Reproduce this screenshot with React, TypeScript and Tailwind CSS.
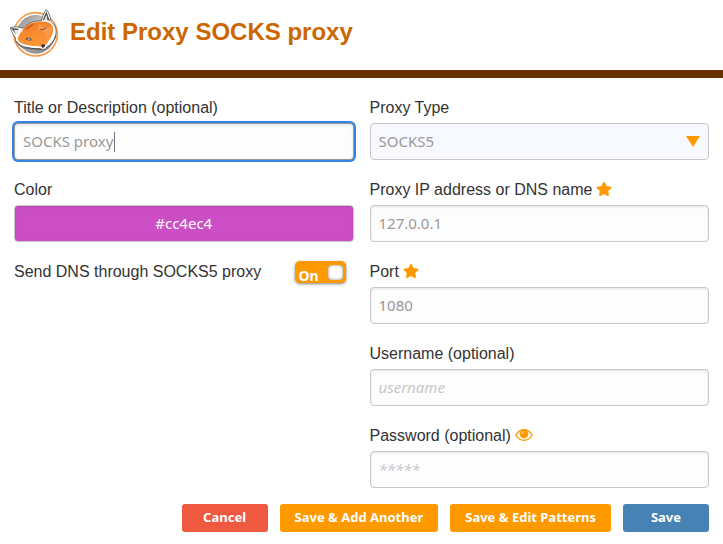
import { useState } from "react";
import type { InputHTMLAttributes, ReactNode } from "react";
import { FaStar } from "react-icons/fa";

const control =
  "block h-[37px] w-full rounded border px-2 pb-px font-['Noto_Sans',sans-serif] text-[15px] text-[#999] outline-none placeholder:text-[#c8c8c8]";

const inset = "bg-[#fdfdfd] shadow-[inset_0_1px_3px_rgba(0,0,0,0.1)]";

const actionButton =
  "h-7 min-w-[86px] rounded-[3px] px-[15px] pb-[2px] font-['Noto_Sans',sans-serif] text-[13px] leading-[26px] font-bold whitespace-nowrap text-white";

function FoxLogo() {
  return (
    <svg viewBox="0 0 150 150" className="size-[50px] shrink-0" aria-hidden="true">
      <defs>
        <linearGradient id="disc" x1="0" y1="0" x2="1" y2="1">
          <stop offset="0" stopColor="#888" />
          <stop offset="0.35" stopColor="#bbb" />
          <stop offset="1" stopColor="#777" />
        </linearGradient>
        <linearGradient id="fur" x1="0" y1="0" x2="0.4" y2="1">
          <stop offset="0" stopColor="#ee7d25" />
          <stop offset="1" stopColor="#ff9638" />
        </linearGradient>
      </defs>
      <circle cx="77" cy="76" r="65" fill="#fff" stroke="#f79a4d" strokeWidth="5" />
      <circle cx="77" cy="76" r="58" fill="url(#disc)" />
      <path
        d="M1 56 C14 52 27 53 40 58 C52 43 70 35 94 36 C97 22 102 10 109 2 C117 10 122 24 123 38 C136 48 141 62 137 80 C133 96 120 110 107 119 C101 122 94 121 88 119 C66 121 42 120 28 110 C17 101 15 94 17 87 C9 78 4 67 1 56Z"
        fill="#fff"
        stroke="#555"
        strokeWidth="2.5"
        strokeLinejoin="round"
      />
      <path d="M3 57 L27 59 L23 64 L12 62 L19 78Z M109 7 L120 37 L112 33 L109 18 L103 33 L98 34Z" fill="#555" />
      <path d="M14 64 L27 65 L22 79Z M109 20 L112 35 L104 33Z" fill="#e4e4e4" />
      <path
        d="M40 60 C51 45 70 38 94 38 C107 36 120 40 126 49 C133 60 130 73 122 86 C115 94 111 106 101 113 C91 113 78 111 64 111 C50 112 37 108 28 99 C22 93 22 88 26 81 C30 74 34 68 40 60Z"
        fill="url(#fur)"
      />
      <path d="M88 44 C80 54 84 64 94 67 C105 70 110 76 109 86 C121 78 128 66 126 52 C118 60 101 56 88 44Z" fill="#f79a4d" />
      <path d="M42 61 C53 50 65 44 77 42 C69 49 62 55 52 62Z" fill="#d9641d" />
      <path d="M25 96 C39 109 56 108 75 112 L93 116 C68 118 37 117 25 96Z" fill="#fff" />
      <path d="M46 90 C52 84 61 84 66 93 C60 96 52 95 46 90Z" fill="#6b5a50" />
      <path d="M52 90 C55 87 59 88 61 91 C58 93 55 93 52 90Z" fill="#ddd" />
      <path d="M91 62 C98 63 104 61 109 55" stroke="#8c4b22" strokeWidth="3" fill="none" />
      <path d="M129 57 C132 72 125 85 118 94 L110 110 C124 101 136 88 135 66Z" fill="#fff" />
      <path d="M93 109 C96 105 102 105 105 109 C105 115 101 118 97 116Z" fill="#333" />
      <path d="M19 96 C27 118 70 118 95 121 M108 117 C121 108 134 96 137 80" stroke="#444" strokeWidth="3" fill="none" />
    </svg>
  );
}

function Field({ id, label, icon, children }: { id: string; label: string; icon?: ReactNode; children: ReactNode }) {
  return (
    <div>
      <div className="mb-1 flex h-6 items-center gap-1 text-[#333]">
        <label htmlFor={id} className="pt-0.5">{label}</label>
        {icon}
      </div>
      {children}
    </div>
  );
}

function TextBox(props: InputHTMLAttributes<HTMLInputElement>) {
  return <input {...props} className={`${control} ${inset} border-[#c8c8ca] placeholder:italic`} />;
}

const star = <FaStar className="size-4 text-[#ff9900]" aria-hidden="true" />;

export default function App() {
  const [title, setTitle] = useState("SOCKS proxy");
  const [dns, setDns] = useState(true);
  const [reveal, setReveal] = useState(false);

  return (
    <main className="bg-white font-['Liberation_Sans',Arial,sans-serif] text-base">
      <header className="flex h-[78px] items-start gap-[10px] border-b-8 border-[#663300] pt-[9px] pl-[10px]">
        <FoxLogo />
        <h1 className="pt-[9px] text-2xl leading-7 font-bold text-[#cc6600]">Edit Proxy {title}</h1>
      </header>

      <form className="px-[14px] pt-[17px]" onSubmit={(e) => e.preventDefault()}>
        <div className="grid grid-cols-2 gap-4">
          <div className="flex flex-col gap-[17px]">
            <Field id="title" label="Title or Description (optional)">
              <div className="relative">
                <input
                  id="title"
                  value={title}
                  onChange={(e) => setTitle(e.target.value)}
                  className={`${control} ${inset} border-[#999] caret-transparent ring-2 ring-[#3584e4]`}
                />
                <span className="absolute top-[9px] left-[100px] h-5 w-px bg-[#777]" />
              </div>
            </Field>
            <Field id="color" label="Color">
              <input
                id="color"
                readOnly
                value="#cc4ec4"
                className="block h-[37px] w-full rounded border border-[#c8c8ca] bg-[#cc4ec4] pb-px text-center font-['Noto_Sans',sans-serif] text-[15px] text-white shadow-[inset_0_1px_3px_rgba(0,0,0,0.1)] outline-none"
              />
            </Field>
            <div className="flex h-[26px] items-center justify-between pr-2 text-[#333]">
              <label htmlFor="dns">Send DNS through SOCKS5 proxy</label>
              <label className="flex h-[22px] w-[51px] items-center justify-between rounded-[5px] bg-[#ff9900] pr-[3px] pl-1 shadow-[0_1px_3px_rgba(0,0,0,0.5)]">
                <input id="dns" type="checkbox" checked={dns} onChange={(e) => setDns(e.target.checked)} className="sr-only" />
                <span className="pt-[7px] font-['Noto_Sans',sans-serif] text-[14px] leading-4 font-bold text-white">
                  {dns ? "On" : "Off"}
                </span>
                <span className="size-[15px] rounded bg-white shadow-[inset_0_0_3px_rgba(0,0,0,0.5)]" />
              </label>
            </div>
          </div>

          <div className="flex flex-col gap-[17px]">
            <Field id="type" label="Proxy Type">
              <div className="relative">
                <select id="type" defaultValue="SOCKS5" className={`${control} appearance-none border-[#c8c8ca] bg-[#f8f9ff]`}>
                  <option>SOCKS5</option>
                  <option>SOCKS4</option>
                  <option>HTTP</option>
                </select>
                <svg viewBox="0 0 14 11" className="pointer-events-none absolute top-[13px] right-[9px] h-[11px] w-[14px]" aria-hidden="true">
                  <path d="M0 0H14L7 11Z" fill="#ff9900" />
                </svg>
              </div>
            </Field>
            <Field id="address" label="Proxy IP address or DNS name" icon={star}>
              <TextBox id="address" defaultValue="127.0.0.1" />
            </Field>
            <Field id="port" label="Port" icon={star}>
              <TextBox id="port" defaultValue="1080" />
            </Field>
            <Field id="username" label="Username (optional)">
              <TextBox id="username" placeholder="username" />
            </Field>
            <Field
              id="password"
              label="Password (optional)"
              icon={
                <button type="button" aria-label="Show password" onClick={() => setReveal(!reveal)}>
                  <svg viewBox="0 0 18 12" className="h-3 w-[18px]" aria-hidden="true">
                    <path d="M0.8 6C5 -1 13 -1 17.2 6C13 13 5 13 0.8 6Z" fill="none" stroke="#ff9900" strokeWidth="1.3" />
                    <circle cx="9" cy="5" r="4.4" fill="#ff9900" />
                    <path d="M6.8 4.8C6.8 3.5 7.7 2.7 9 2.6" fill="none" stroke="#fff" strokeWidth="0.7" />
                  </svg>
                </button>
              }
            >
              <TextBox id="password" type={reveal ? "text" : "password"} placeholder="*****" />
            </Field>
          </div>
        </div>

        <div className="mt-4 flex justify-end gap-3">
          <button type="button" className={`${actionButton} bg-[#ef5940]`}>Cancel</button>
          <button type="button" className={`${actionButton} bg-[#ff9900]`}>Save &amp; Add Another</button>
          <button type="button" className={`${actionButton} bg-[#ff9900]`}>Save &amp; Edit Patterns</button>
          <button type="submit" className={`${actionButton} bg-[#4682b4]`}>Save</button>
        </div>
      </form>
    </main>
  );
}
